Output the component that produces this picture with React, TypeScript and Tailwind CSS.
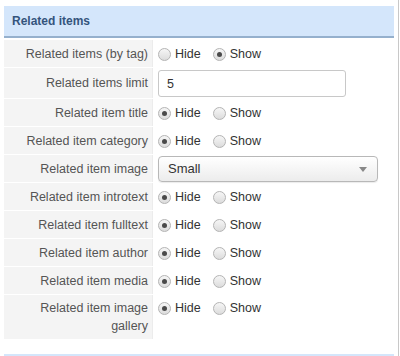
import React from 'react';

type Row =
  | { label: string[]; kind: 'radio'; value: 'hide' | 'show' }
  | { label: string[]; kind: 'input'; value: string }
  | { label: string[]; kind: 'select'; value: string };

const rows: Row[] = [
  { label: ['Related items (by tag)'], kind: 'radio', value: 'show' },
  { label: ['Related items limit'], kind: 'input', value: '5' },
  { label: ['Related item title'], kind: 'radio', value: 'hide' },
  { label: ['Related item category'], kind: 'radio', value: 'hide' },
  { label: ['Related item image'], kind: 'select', value: 'Small' },
  { label: ['Related item introtext'], kind: 'radio', value: 'hide' },
  { label: ['Related item fulltext'], kind: 'radio', value: 'hide' },
  { label: ['Related item author'], kind: 'radio', value: 'hide' },
  { label: ['Related item media'], kind: 'radio', value: 'hide' },
  { label: ['Related item image', 'gallery'], kind: 'radio', value: 'hide' },
];

function Radio({ checked, text }: { checked: boolean; text: string }) {
  return (
    <span className="flex items-center">
      <span className="w-[13px] h-[13px] rounded-full border border-[#b4b4b4] bg-gradient-to-b from-[#f6f6f6] to-[#dcdcdc] flex items-center justify-center">
        {checked && <span className="w-[5px] h-[5px] rounded-full bg-[#4a4a4a]" />}
      </span>
      <span className="ml-[4px] text-[#333]">{text}</span>
    </span>
  );
}

function Control({ row }: { row: Row }) {
  if (row.kind === 'radio') {
    return (
      <div className="flex items-center gap-[12px] h-[18px]">
        <Radio checked={row.value === 'hide'} text="Hide" />
        <Radio checked={row.value === 'show'} text="Show" />
      </div>
    );
  }
  if (row.kind === 'input') {
    return (
      <div className="w-[188px] h-[27px] border border-[#c8c8c8] rounded-[3px] bg-white flex items-center px-[8px] text-[#333]">
        {row.value}
      </div>
    );
  }
  return (
    <div className="w-[220px] h-[26px] border border-[#b8b8b8] rounded-[4px] bg-gradient-to-b from-white to-[#ececec] flex items-center justify-between pl-[9px] pr-[10px] text-[13px] text-[#333] shadow-[0_1px_1px_rgba(0,0,0,0.08)]">
      <span>{row.value}</span>
      <span className="w-0 h-0 border-l-[4px] border-r-[4px] border-t-[5px] border-l-transparent border-r-transparent border-t-[#888]" />
    </div>
  );
}

export default function App() {
  return (
    <div className="w-[400px] h-[356px] overflow-hidden bg-white relative" style={{ fontFamily: '"Liberation Sans", Arial, sans-serif' }}>
      <div className="absolute right-[1px] top-0 bottom-0 w-[1px] bg-[#c8c8c8]" />
      <div className="ml-[4px] w-[390px] pt-[6px]">
        <div className="h-[32px] bg-[#d4e6fb] border-b-2 border-[#95b0cd] flex items-center pl-[8px]">
          <span className="text-[12px] font-bold text-[#34547c]">Related items</span>
        </div>
        <div className="mt-[2px] text-[12.5px] leading-[18px]">
          {rows.map((row, i) => {
            const tall = row.label.length > 1;
            const h = row.kind === 'input' ? 'h-[31px]' : tall ? 'h-[45px]' : 'h-[28px]';
            return (
              <div key={i} className={`flex ${h}`}>
                <div className="w-[148px] bg-[#f4f4f4] border-b border-white flex items-center justify-end pr-[4px] text-[#555] text-right">
                  <div>
                    {row.label.map((l, j) => (
                      <div key={j}>{l}</div>
                    ))}
                  </div>
                </div>
                <div className="w-[1px] bg-[#ececec] border-b border-white" />
                <div className={`flex-1 pl-[5px] flex ${tall ? 'items-start pt-[4px]' : 'items-center'}`}>
                  <Control row={row} />
                </div>
              </div>
            );
          })}
        </div>
        <div className="mt-[14px] h-[10px] bg-[#d4e6fb]" />
      </div>
    </div>
  );
}
